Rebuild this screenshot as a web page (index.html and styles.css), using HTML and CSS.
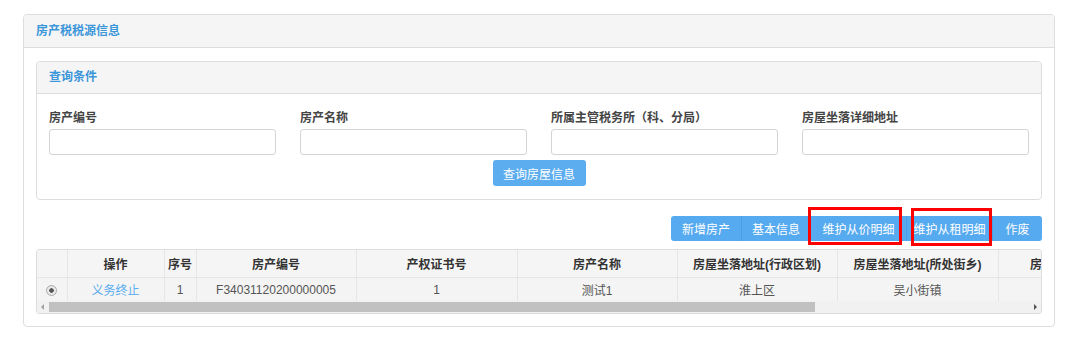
FILE: index.html
```html
<!DOCTYPE html>
<html lang="zh-CN">
<head>
    <meta charset="UTF-8">
    <meta name="viewport" content="width=device-width, initial-scale=1.0">
    <title>房产税税源信息</title>
    <link rel="stylesheet" href="styles.css">
</head>
<body>
    <div class="page">
        <div class="panel">
            <div class="panel-head">房产税税源信息</div>
            <div class="panel-body">
                <div class="panel inner">
                    <div class="panel-head">查询条件</div>
                    <div class="query-body">
                        <div class="fields">
                            <div class="field">
                                <label>房产编号</label>
                                <input type="text">
                            </div>
                            <div class="field">
                                <label>房产名称</label>
                                <input type="text">
                            </div>
                            <div class="field">
                                <label>所属主管税务所（科、分局）</label>
                                <input type="text">
                            </div>
                            <div class="field">
                                <label>房屋坐落详细地址</label>
                                <input type="text">
                            </div>
                        </div>
                        <div class="query-actions">
                            <button class="btn">查询房屋信息</button>
                        </div>
                    </div>
                </div>

                <div class="toolbar">
                    <button class="tb-btn w70">新增房产</button>
                    <button class="tb-btn w69">基本信息</button>
                    <button class="tb-btn w96">维护从价明细</button>
                    <button class="tb-btn w86">维护从租明细</button>
                    <button class="tb-btn w50">作废</button>
                </div>

                <div class="grid">
                    <div class="grid-scroll">
                        <table>
                            <colgroup>
                                <col style="width:30px">
                                <col style="width:97px">
                                <col style="width:32px">
                                <col style="width:160px">
                                <col style="width:161px">
                                <col style="width:160px">
                                <col style="width:160px">
                                <col style="width:161px">
                                <col style="width:160px">
                                <col style="width:160px">
                            </colgroup>
                            <thead>
                                <tr>
                                    <th></th>
                                    <th>操作</th>
                                    <th>序号</th>
                                    <th>房产编号</th>
                                    <th>产权证书号</th>
                                    <th>房产名称</th>
                                    <th>房屋坐落地址(行政区划)</th>
                                    <th>房屋坐落地址(所处街乡)</th>
                                    <th>房屋坐落详细地址</th>
                                    <th>房产用途</th>
                                </tr>
                            </thead>
                            <tbody>
                                <tr>
                                    <td><span class="radio"></span></td>
                                    <td><a class="link">义务终止</a></td>
                                    <td>1</td>
                                    <td>F34031120200000005</td>
                                    <td>1</td>
                                    <td>测试1</td>
                                    <td>淮上区</td>
                                    <td>吴小街镇</td>
                                    <td></td>
                                    <td></td>
                                </tr>
                            </tbody>
                        </table>
                    </div>
                    <div class="hscroll">
                        <span class="arrow left"></span>
                        <div class="track"><div class="thumb"></div></div>
                        <span class="arrow right"></span>
                    </div>
                </div>
            </div>
        </div>

        <div class="mark mark-1"></div>
        <div class="mark mark-2"></div>
    </div>
</body>
</html>
```

FILE: styles.css
```css
body {
    margin: 0;
    font-family: "Liberation Sans", "Noto Sans CJK SC", sans-serif;
    font-size: 12px;
    color: #333;
    background: #fff;
}
.page {
    position: relative;
    padding: 14px 25px 0 23px;
}
.panel {
    border: 1px solid #ddd;
    border-radius: 4px;
    background: #fff;
}
.panel-head {
    height: 32px;
    line-height: 32px;
    padding: 0 12px;
    background: #f5f5f5;
    border-bottom: 1px solid #ddd;
    border-radius: 4px 4px 0 0;
    color: #3b96da;
    font-weight: bold;
}
.inner .panel-head {
    height: 31px;
    line-height: 31px;
}
.panel-body {
    padding: 13px 12px 12px;
}
.query-body {
    padding: 17px 12px 13px;
}
.fields {
    display: grid;
    grid-template-columns: repeat(4, 1fr);
    gap: 24px;
}
.field label {
    display: block;
    height: 14px;
    line-height: 14px;
    margin-bottom: 4px;
    font-weight: bold;
    color: #444;
}
.field input {
    display: block;
    box-sizing: border-box;
    width: 100%;
    height: 26px;
    border: 1px solid #d4d4d4;
    border-radius: 3px;
    background: #fff;
}
.query-actions {
    display: flex;
    justify-content: center;
    margin-top: 5px;
}
.btn {
    width: 93px;
    height: 26px;
    border: none;
    border-radius: 3px;
    background: #5badf0;
    color: #fff;
    font-family: inherit;
    font-size: 12px;
    padding: 0;
}
.toolbar {
    display: flex;
    justify-content: flex-end;
    margin-top: 16px;
}
.tb-btn {
    height: 25px;
    padding: 0;
    border: none;
    border-left: 1px solid #4c9fe2;
    background: #56aaef;
    color: #fff;
    font-family: inherit;
    font-size: 12px;
}
.tb-btn:first-child {
    border-left: none;
    border-radius: 3px 0 0 3px;
}
.tb-btn:last-child {
    border-radius: 0 3px 3px 0;
}
.w70 { width: 70px; }
.w69 { width: 69px; }
.w96 { width: 96px; }
.w86 { width: 86px; }
.w50 { width: 50px; }
.grid {
    margin-top: 8px;
    border: 1px solid #ddd;
    border-radius: 3px;
    overflow: hidden;
}
.grid-scroll {
    overflow: hidden;
}
table {
    table-layout: fixed;
    border-collapse: collapse;
    width: 1281px;
}
th, td {
    text-align: center;
    border-right: 1px solid #e6e6e6;
    white-space: nowrap;
    overflow: hidden;
    padding: 0;
}
th {
    height: 27px;
    background: #f5f5f5;
    border-bottom: 1px solid #e6e6e6;
    font-weight: bold;
    color: #333;
}
td {
    height: 23px;
    background: #f4f4f4;
    color: #555;
}
.link {
    color: #5aacf0;
}
.radio {
    display: inline-block;
    width: 9px;
    height: 9px;
    border: 1px solid #aaa;
    border-radius: 50%;
    background: radial-gradient(circle, #555 0 2px, #e9e9e9 2.5px);
    vertical-align: middle;
}
.hscroll {
    display: flex;
    align-items: center;
    height: 12px;
    background: #f1f1f1;
}
.arrow {
    width: 12px;
    height: 12px;
    position: relative;
}
.arrow::after {
    content: "";
    position: absolute;
    top: 3px;
    border-top: 3px solid transparent;
    border-bottom: 3px solid transparent;
}
.arrow.left::after {
    left: 4px;
    border-right: 3px solid #a3a3a3;
}
.arrow.right::after {
    left: 5px;
    border-left: 3px solid #505050;
}
.track {
    flex: 1;
    height: 12px;
    padding: 1px 0;
    box-sizing: border-box;
}
.thumb {
    width: 766px;
    height: 10px;
    background: #c1c1c1;
}
.mark {
    position: absolute;
    border: 3px solid #f00;
    box-sizing: border-box;
}
.mark-1 {
    left: 808px;
    top: 207px;
    width: 94px;
    height: 38px;
}
.mark-2 {
    left: 911px;
    top: 208px;
    width: 81px;
    height: 38px;
}
```
